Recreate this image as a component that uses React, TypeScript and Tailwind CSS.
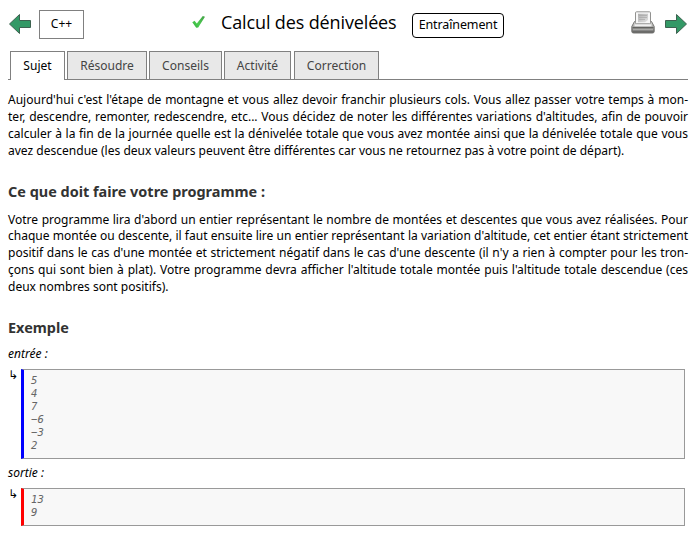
import type { ReactNode } from "react";

const tabs = [
  { label: "Résoudre", style: "ml-[2px] w-[80px]" },
  { label: "Conseils", style: "ml-[2px] w-[73px]" },
  { label: "Activité", style: "ml-[2px] w-[67px]" },
  { label: "Correction", style: "ml-[3px] w-[85px]" },
];

function Arrow({ flip = false }: { flip?: boolean }) {
  return (
    <svg width="24" height="22" viewBox="0 0 24 22" className={flip ? "-scale-x-100" : ""}>
      <path
        d="M1.5 7.5H12.5V1.5L22.5 11L12.5 20.5V14.5H1.5Z"
        fill="#339966"
        stroke="#3d6250"
        strokeWidth="1"
      />
    </svg>
  );
}

function Check() {
  return (
    <svg width="14" height="14" viewBox="0 0 14 14">
      <defs>
        <linearGradient id="tick" x1="0" y1="1" x2="1" y2="0">
          <stop offset="0" stopColor="#2eae3c" />
          <stop offset="0.4" stopColor="#4ccb50" />
          <stop offset="1" stopColor="#43a047" />
        </linearGradient>
      </defs>
      <path d="M0.3 7.2L2.6 5.8L4.8 8.4L10.8 1L13 1.8L6.2 12.6L4.2 12.8Z" fill="url(#tick)" />
    </svg>
  );
}

function Printer() {
  return (
    <svg width="24" height="24" viewBox="0 0 24 24">
      <defs>
        <linearGradient id="body" x1="0" y1="0" x2="0" y2="1">
          <stop offset="0" stopColor="#dcdcda" />
          <stop offset="0.5" stopColor="#a0a09e" />
          <stop offset="1" stopColor="#5c5c5a" />
        </linearGradient>
        <linearGradient id="sheet" x1="0" y1="0" x2="1" y2="1">
          <stop offset="0" stopColor="#b0b0b0" />
          <stop offset="1" stopColor="#e2e2e2" />
        </linearGradient>
      </defs>
      <path d="M3.5 10.5L0.8 15.5V20.5Q0.8 22 2.5 22H21.5Q23.2 22 23.2 20.5V15.5L20.5 10.5Z" fill="url(#body)" stroke="#777775" />
      <rect x="4.5" y="0.8" width="15" height="12" rx="1" fill="#f7f7f7" stroke="#929290" />
      <path d="M7 2.8H17V9L14 11.2H7Z" fill="url(#sheet)" />
      <path d="M8 4.5H16M8 6.5H16M8 8.5H14" stroke="#a8a8a8" strokeWidth="0.7" />
      <path d="M3.5 14.3H20.5" stroke="#f0f0f0" strokeWidth="2" />
      <path d="M1.5 16.6H22.5" stroke="#636361" strokeWidth="1.2" />
      <path d="M2 18.6H22" stroke="#a9a9a7" strokeWidth="1.4" />
      <path d="M2 20.8H22" stroke="#6c6c6a" strokeWidth="1.4" />
    </svg>
  );
}

function Sample({ lines, box }: { lines: string[]; box: string }) {
  return (
    <div className="flex">
      <span className="w-[13px] font-['DejaVu_Sans',sans-serif] text-[12px] leading-[12px]">↳</span>
      <pre
        className={`w-[664px] border border-l-[3px] border-[#999999] bg-[#f8f8f8] pl-[7px] pt-[4px] font-['DejaVu_Sans_Mono',monospace] text-[10.6px] leading-[13px] italic text-[#666666] ${box}`}
      >
        {lines.join("\n")}
      </pre>
    </div>
  );
}

function Heading({ children }: { children: ReactNode }) {
  return <h2 className="text-[14.45px] leading-[20px] font-bold text-[#333333]">{children}</h2>;
}

export default function App() {
  return (
    <main className="h-[534px] w-[694px] overflow-hidden bg-white pl-[8px] pr-[6px] font-['Noto_Sans',sans-serif] text-[12.04px] leading-[16.86px] text-black">
      <header className="flex h-[51px] items-start">
        <div className="pt-[13px]">
          <Arrow flip />
        </div>
        <div className="mt-[10px] ml-[7px] flex h-[29px] w-[45px] items-center justify-center border border-[#808080] pb-[1px]">
          C++
        </div>
        <div className="mt-[15px] ml-[108px]">
          <Check />
        </div>
        <h1 className="mt-[9px] ml-[15px] w-[191px] font-['Open_Sans',sans-serif] text-[18px] leading-[27px] tracking-[-0.13px] whitespace-nowrap">
          Calcul des dénivelées
        </h1>
        <div className="mt-[13px] flex h-[25px] w-[92px] items-center justify-center rounded-[4px] border border-black pb-[1px] text-[12.5px] tracking-[-0.12px]">
          Entraînement
        </div>
        <div className="mt-[11px] ml-[127px]">
          <Printer />
        </div>
        <div className="mt-[13px] ml-[9px]">
          <Arrow />
        </div>
      </header>

      <nav className="flex h-[29px] items-stretch">
        <div className="w-[2px] border-b border-[#808080]" />
        <div className="w-[55px] border border-b-0 border-[#808080] pt-[6px] text-center">Sujet</div>
        {tabs.map((tab) => (
          <div key={tab.label} className="flex border-b border-[#808080]">
            <div className={`border border-b-0 border-[#808080] bg-[#e8e8e8] pt-[6px] text-center text-[#444444] ${tab.style}`}>
              {tab.label}
            </div>
          </div>
        ))}
        <div className="grow border-b border-[#808080]" />
      </nav>

      <p className="mt-[12px] h-[68px] text-justify">
        Aujourd'hui c'est l'étape de montagne et vous allez devoir franchir plusieurs cols. Vous allez passer votre
        temps à mon&shy;ter, descendre, remonter, redescendre, etc... Vous décidez de noter les différentes variations
        d'altitudes, afin de pouvoir calculer à la fin de la journée quelle est la dénivelée totale que vous avez
        montée ainsi que la dénivelée totale que vous avez descendue (les deux valeurs peuvent être différentes car
        vous ne retournez pas à votre point de départ).
      </p>

      <div className="mt-[22px]">
        <Heading>Ce que doit faire votre programme :</Heading>
      </div>
      <p className="mt-[9.55px] h-[84px] text-justify">
        Votre programme lira d'abord un entier représentant le nombre de montées et descentes que vous avez réalisées.
        Pour chaque montée ou descente, il faut ensuite lire un entier représentant la variation d'altitude, cet entier
        étant strictement positif dans le cas d'une montée et strictement négatif dans le cas d'une descente (il n'y a
        rien à compter pour les tron&shy;çons qui sont bien à plat). Votre programme devra afficher l'altitude totale
        montée puis l'altitude totale descendue (ces deux nombres sont positifs).
      </p>

      <div className="mt-[22.45px]">
        <Heading>Exemple</Heading>
      </div>
      <div className="mt-[8px] h-[23px] italic">entrée :</div>
      <Sample lines={["5", "4", "7", "−6", "−3", "2"]} box="h-[90px] border-l-[#0000ff]" />
      <div className="mt-[6px] h-[23px] italic">sortie :</div>
      <Sample lines={["13", "9"]} box="h-[38px] border-l-[#ff0000]" />
    </main>
  );
}
